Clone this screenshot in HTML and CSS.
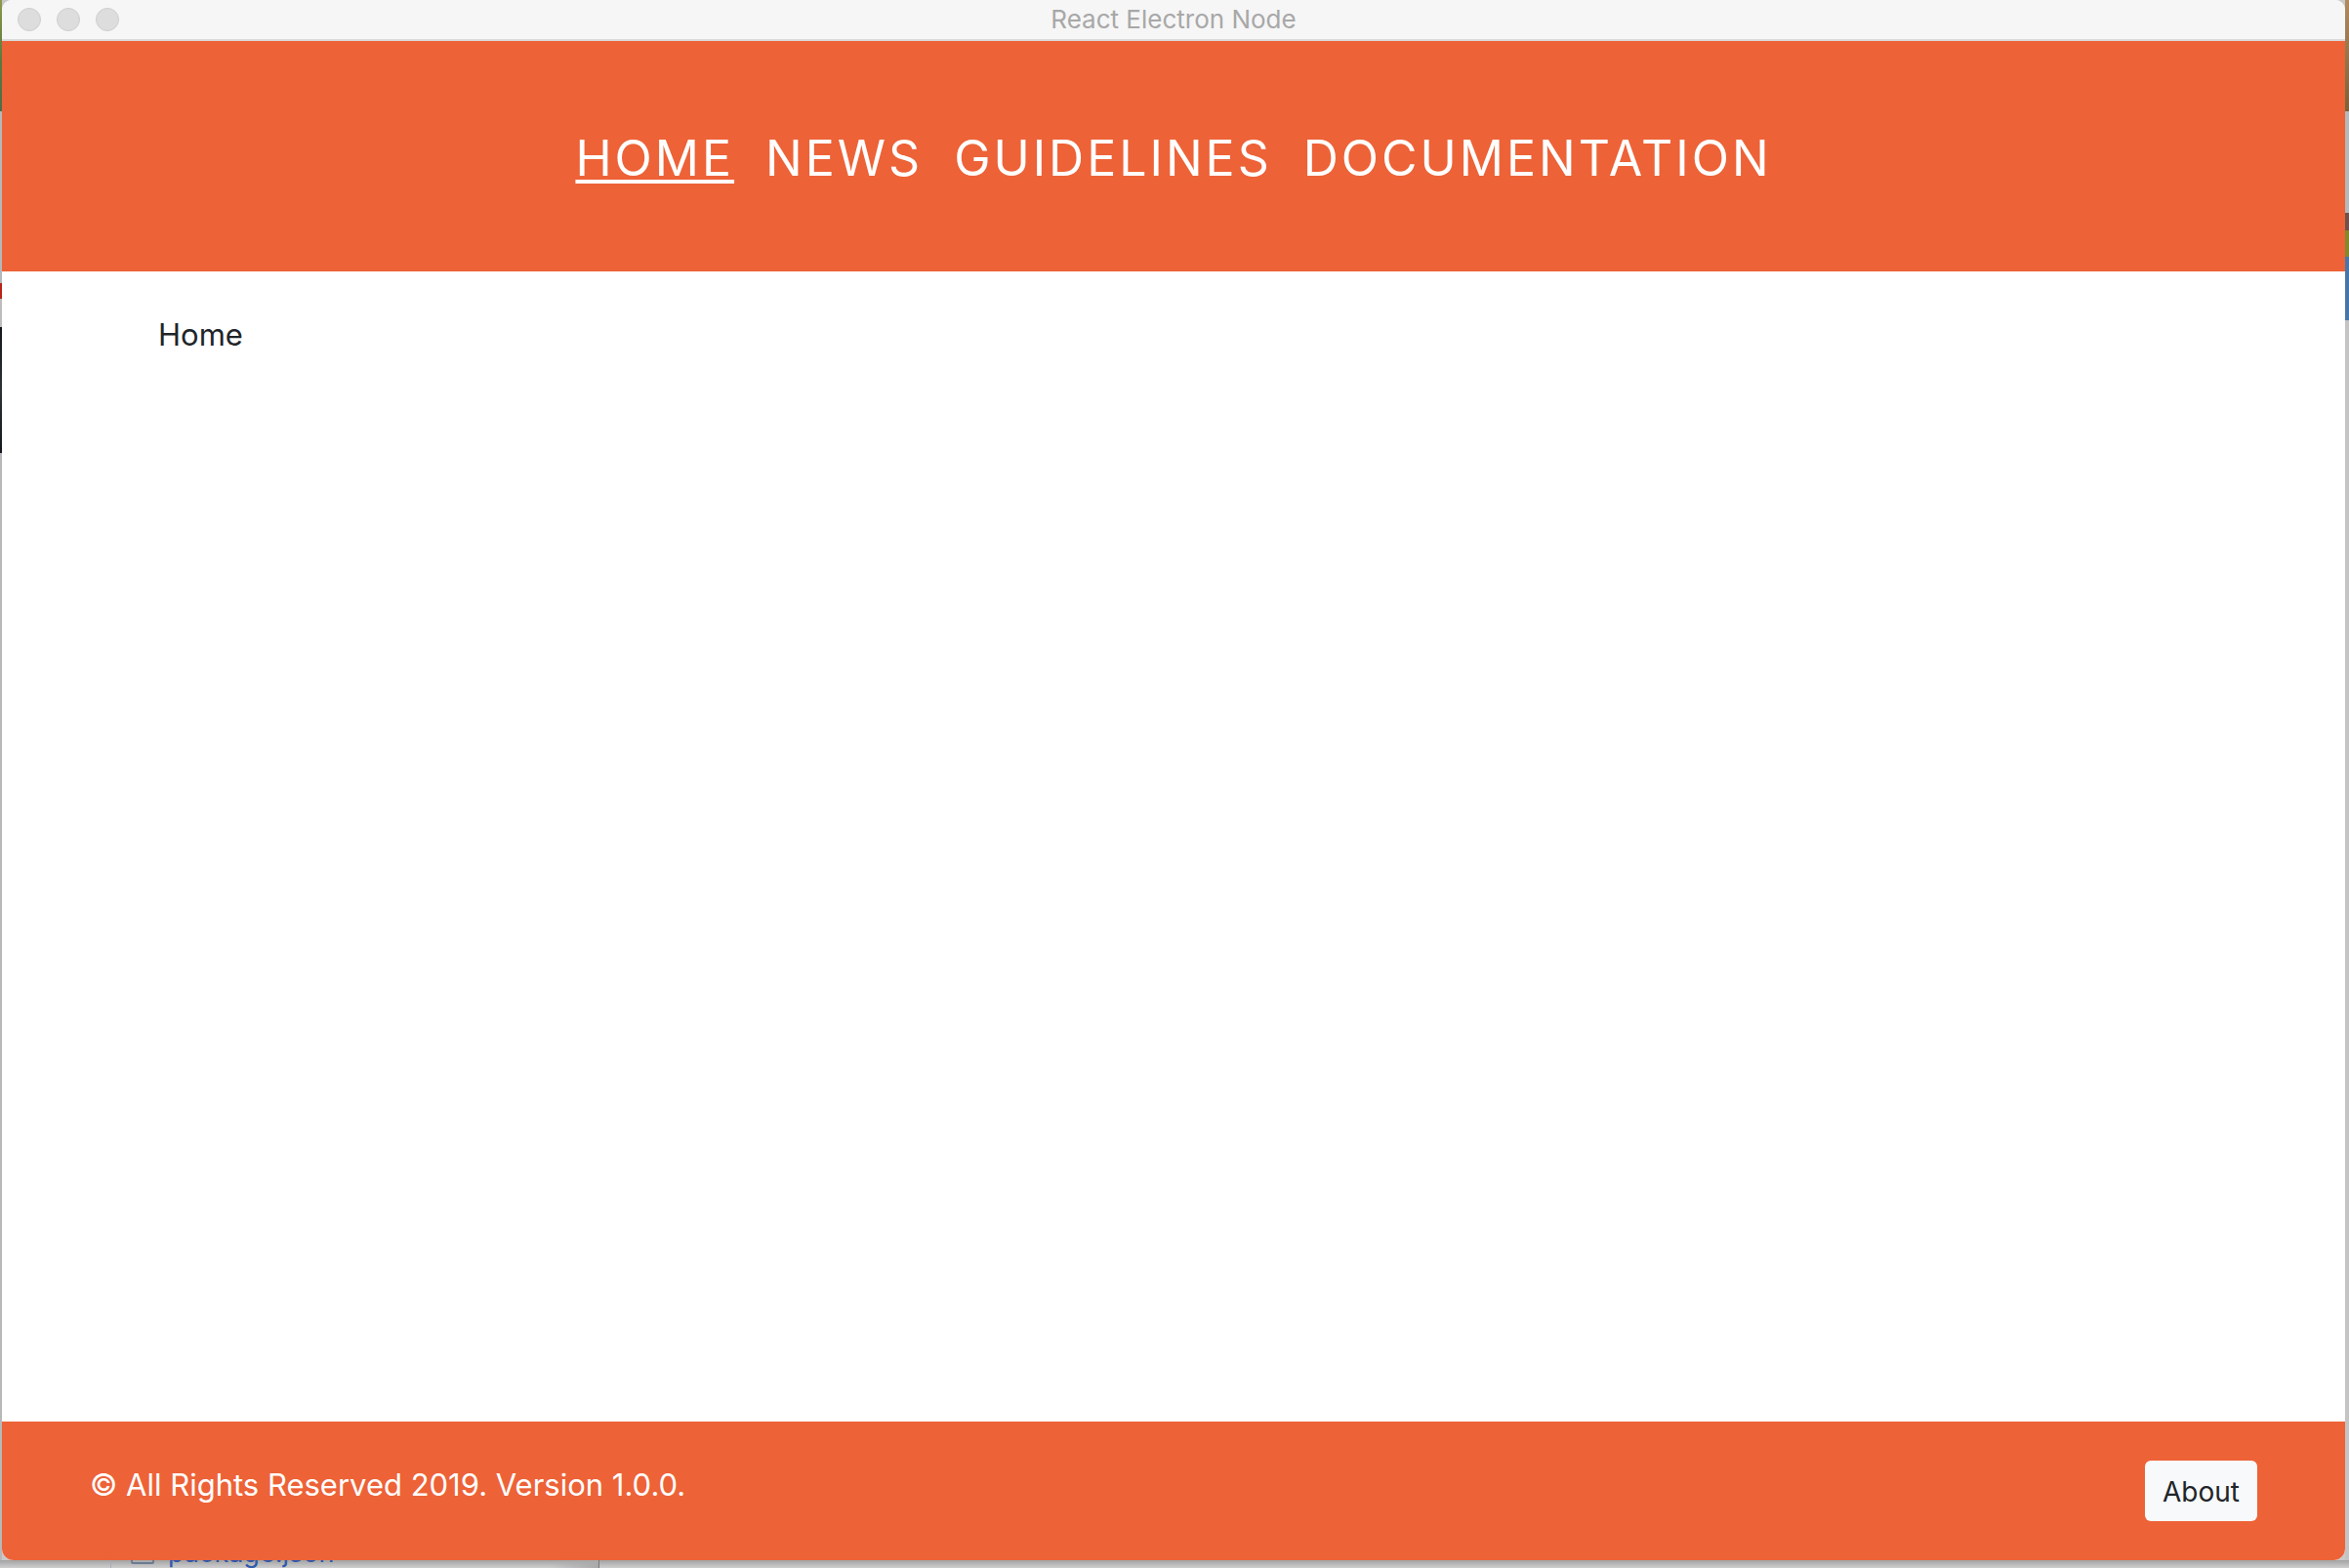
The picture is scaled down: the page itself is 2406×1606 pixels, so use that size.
FILE: index.html
```html
<!DOCTYPE html>
<html lang="en">
<head>
<meta charset="utf-8">
<title>React Electron Node</title>
<link rel="stylesheet" href="styles.css">
</head>
<body>
<div class="desktop-left"></div>
<div class="window">
  <div class="titlebar">
    <div class="lights"><span class="light"></span><span class="light"></span><span class="light"></span></div>
    <span class="title">React Electron Node</span>
  </div>
  <header class="header">
    <nav class="nav">
      <a class="nav-link active" href="#home">HOME</a>
      <a class="nav-link" href="#news">NEWS</a>
      <a class="nav-link" href="#guidelines">GUIDELINES</a>
      <a class="nav-link" href="#documentation">DOCUMENTATION</a>
    </nav>
  </header>
  <main class="content">Home</main>
  <footer class="footer">
    <span class="copyright">© All Rights Reserved 2019. Version 1.0.0.</span>
    <button class="about" type="button">About</button>
  </footer>
</div>
<div class="desktop-right"></div>
<div class="behind">
  <svg class="file-icon" width="24" height="18" viewBox="0 0 24 18"><rect x="1" y="1" width="22" height="16" rx="1" fill="none" stroke="#6b7b92" stroke-width="2"/></svg>
  <span class="file-name">package.json</span>
</div>
</body>
</html>
```
FILE: styles.css
```css
* {
  box-sizing: border-box;
}

body {
  margin: 0;
  height: 100vh;
  display: grid;
  grid-template-columns: 2px 1fr 4px;
  grid-template-rows: 1fr 8px;
  overflow: hidden;
  position: relative;
  background: linear-gradient(#a3a3a3, #cecece) bottom / 100% 8px no-repeat #c9c9c9;
  font-family: Inter, "Liberation Sans", sans-serif;
  font-size: 31px;
  line-height: 48px;
  color: #212529;
}

.desktop-left {
  background: linear-gradient(#8c9a48 0, #5c7a3c 60px, #4d6b48 114px, #b5b8ba 114px, #b5b8ba 290px, #b8241a 290px, #b8241a 306px, #bdbdbd 306px, #bdbdbd 335px, #15171c 335px, #2c3238 400px, #15171c 464px, #b8b8b8 464px);
}

.desktop-right {
  background: linear-gradient(#b08a60 0, #7c6038 114px, #b4b9bc 114px, #b4b9bc 218px, #70514c 218px, #70514c 236px, #85882c 236px, #85882c 263px, #4777a8 263px, #4777a8 328px, #c4c4c4 328px);
}

.window {
  position: relative;
  z-index: 1;
  display: flex;
  flex-direction: column;
  overflow: hidden;
  border-radius: 10px 10px 12px 12px;
  background: #fff;
}

.titlebar {
  display: grid;
  grid-template-columns: 1fr auto 1fr;
  align-items: center;
  height: 42px;
  padding: 0 16px;
  background: #f6f6f6;
  border-bottom: 2px solid #dadada;
}

.lights {
  display: flex;
  gap: 16px;
}

.light {
  width: 24px;
  height: 24px;
  border: 1px solid #cecece;
  border-radius: 50%;
  background: #dddddd;
}

.title {
  font-size: 26px;
  line-height: 40px;
  color: #a8a8a8;
}

.header {
  padding: 84px 0 80px;
  background: #ed6237;
}

.nav {
  display: flex;
  justify-content: center;
  gap: 32px;
}

.nav-link {
  font-size: 50px;
  line-height: 72px;
  letter-spacing: 3px;
  color: #fff;
  text-decoration: none;
}

.nav-link.active {
  text-decoration: underline;
  text-decoration-thickness: 4px;
  text-underline-offset: 4px;
  text-decoration-skip-ink: none;
}

.content {
  flex: 1;
  padding: 41px 160px;
}

.footer {
  display: flex;
  align-items: flex-start;
  justify-content: space-between;
  padding: 40px 90px;
  background: #ed6237;
  color: #fff;
}

.copyright {
  line-height: 50px;
}

.about {
  height: 62px;
  padding: 2px 18px 0;
  border: 0;
  border-radius: 6px;
  background: #f8f9fa;
  color: #212529;
  font-family: inherit;
  font-size: 28px;
  line-height: 60px;
}

/* The file list of the window behind shows under the bottom edge. */
.behind {
  position: absolute;
  left: 113px;
  bottom: 0;
  width: 501px;
  height: 24px;
  padding-left: 20px;
  display: flex;
  gap: 14px;
  border-left: 1px solid #a8adb5;
  border-right: 1px solid #777;
  background: linear-gradient(90deg, transparent 90%, #aaa);
}

.file-icon {
  margin-top: 2px;
}

.file-name {
  font-size: 27px;
  line-height: 18px;
  color: #3059ac;
}
```
